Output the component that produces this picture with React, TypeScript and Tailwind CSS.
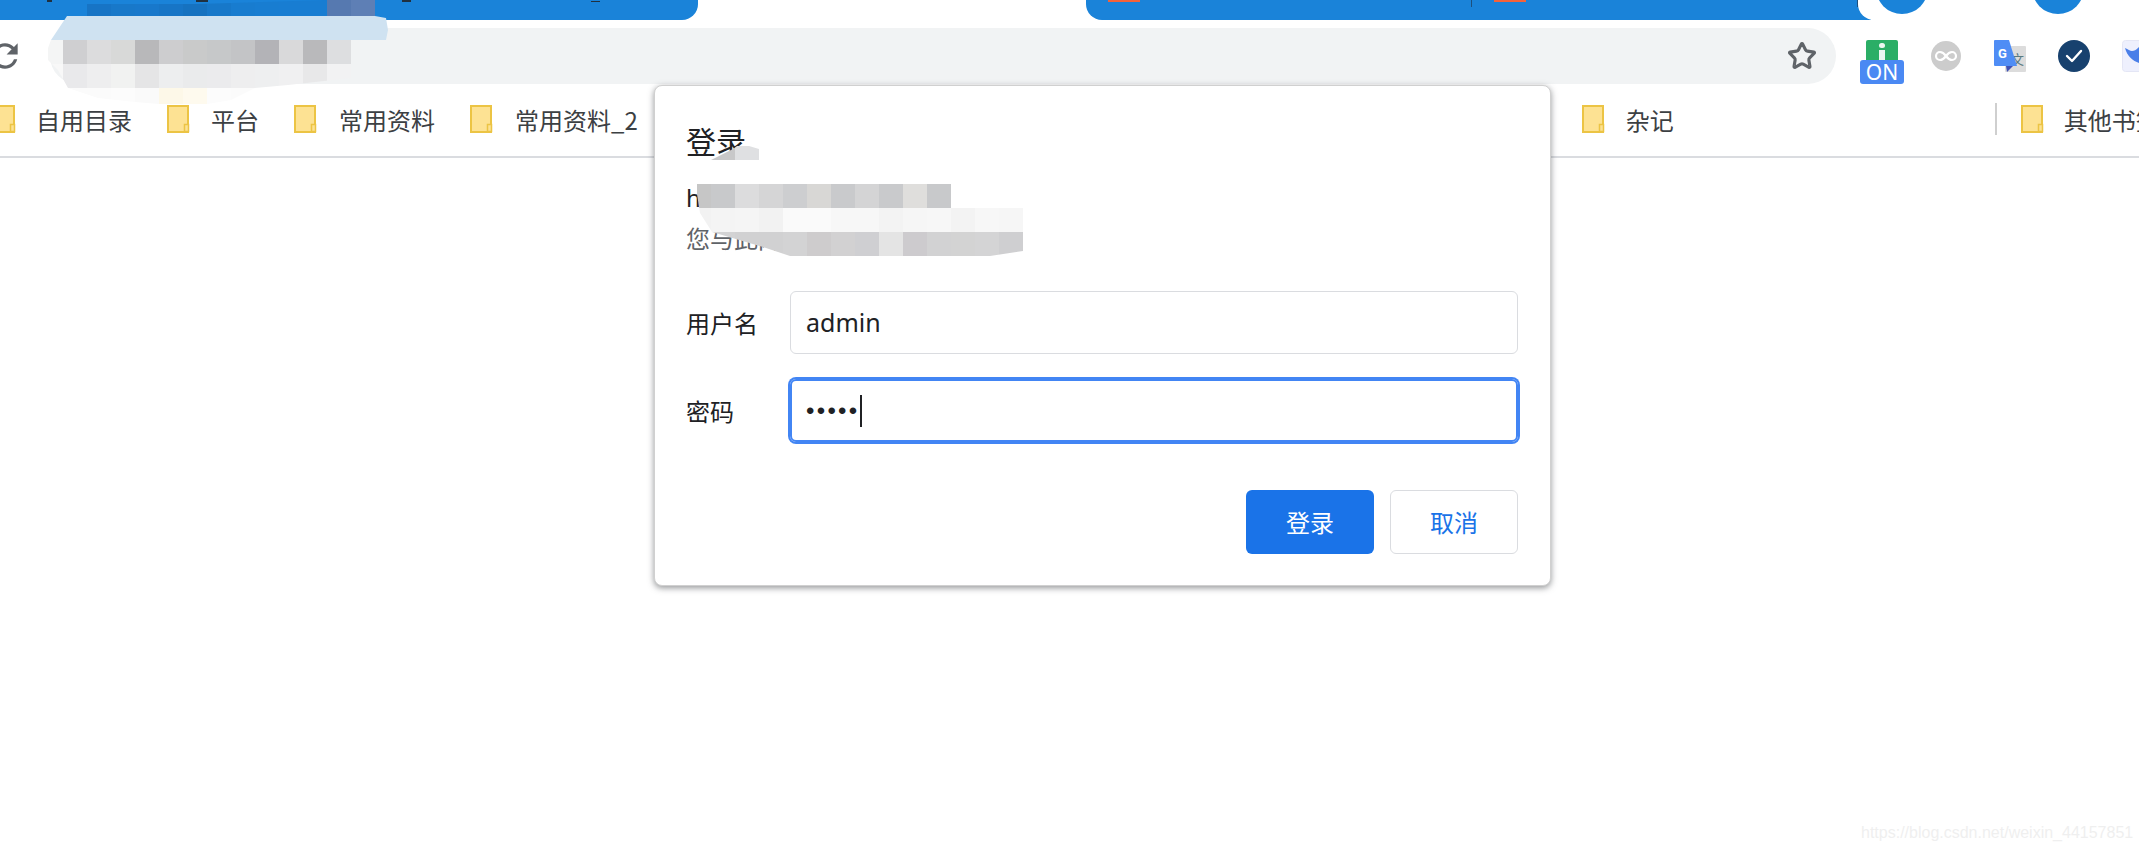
import { Star } from "lucide-react";

const cjk = "font-['Noto_Sans_CJK_SC','Noto_Sans',sans-serif]";

const topRow0 = ["w-[39px] bg-transparent", "w-6 bg-[#1774c5]", "w-6 bg-[#1878c9]", "w-6 bg-[#1878cb]", "w-6 bg-[#1775c6]", "w-6 bg-[#1672c0]", "w-6 bg-[#1778c9]", "w-6 bg-[#187ccf]", "w-6 bg-[#187dd1]", "w-6 bg-[#187dd2]", "w-6 bg-[#187dd2]", "w-6 bg-[#5679b0]", "w-6 bg-[#5e7fb5]"];
const topRow2 = ["w-[15px] bg-[#f4f5f5]", "w-6 bg-[#cfcfd1]", "w-6 bg-[#dcdcdd]", "w-6 bg-[#d8d9d8]", "w-6 bg-[#b8b8ba]", "w-6 bg-[#cdcdcf]", "w-6 bg-[#c9caca]", "w-6 bg-[#c6c8c9]", "w-6 bg-[#c3c4c6]", "w-6 bg-[#b3b3b7]", "w-6 bg-[#d9d9da]", "w-6 bg-[#b9b9bb]", "w-6 bg-[#dddee0]"];
const topRow3 = ["w-[15px] bg-[#f8f8f8]", "w-6 bg-[#e9e9eb]", "w-6 bg-[#eeeeef]", "w-6 bg-[#f1f2f1]", "w-6 bg-[#e5e5e6]", "w-6 bg-[#edeeef]", "w-6 bg-[#eaebec]", "w-6 bg-[#ebebed]", "w-6 bg-[#eeeeef]", "w-6 bg-[#eeeff0]", "w-6 bg-[#f0f0f1]", "w-6 bg-[#e8e8e9]", "w-6 bg-[#f2f2f3]"];
const topRow4 = ["w-[15px] bg-[#fdfdfd]", "w-6 bg-[#fbfbfb]", "w-6 bg-[#fbfbfb]", "w-6 bg-[#fcfcfc]", "w-6 bg-[#fafafa]", "w-6 bg-[#fdf8e8]", "w-6 bg-[#fefaee]", "w-6 bg-[#fcfcfc]", "w-6 bg-[#fbfbfb]", "w-6 bg-[#fdfdfd]"];

const urlRow1 = ["w-[14px] bg-[#c6c6c6]", "w-6 bg-[#c8c9cb]", "w-6 bg-[#dcdcdd]", "w-6 bg-[#d5d5d6]", "w-6 bg-[#cdced0]", "w-6 bg-[#d8d7d5]", "w-6 bg-[#c9cacc]", "w-6 bg-[#d4d4d5]", "w-6 bg-[#c9cacc]", "w-6 bg-[#dfdedc]", "w-6 bg-[#c8c9cb]"];
const urlRow2 = ["w-[14px] bg-[#f2f2f2]", "w-6 bg-[#f4f4f4]", "w-6 bg-[#f5f5f5]", "w-6 bg-[#f2f2f2]", "w-6 bg-[#fafafa]", "w-6 bg-[#fafafa]", "w-6 bg-[#f7f7f7]", "w-6 bg-[#f7f7f7]", "w-6 bg-[#f3f3f3]", "w-6 bg-[#f6f6f6]", "w-6 bg-[#f7f7f7]", "w-6 bg-[#f3f3f3]", "w-6 bg-[#f7f7f7]", "w-6 bg-[#f6f6f6]"];
const urlRow3 = ["w-[14px] bg-[#d3d3d4]", "w-6 bg-[#d3d3d4]", "w-6 bg-[#d1d1d2]", "w-6 bg-[#d1d1d2]", "w-6 bg-[#d3d3d4]", "w-6 bg-[#cecccd]", "w-6 bg-[#d2d1d2]", "w-6 bg-[#cfcfd2]", "w-6 bg-[#e4e4e4]", "w-6 bg-[#cdcbce]", "w-6 bg-[#d2d2d3]", "w-6 bg-[#d3d3d3]", "w-6 bg-[#d4d4d5]", "w-6 bg-[#cfcfd1]"];

function Cells({ cells, height }: { cells: string[]; height: string }) {
  return (
    <div className={`flex ${height}`}>
      {cells.map((c, i) => (
        <div key={i} className={c} />
      ))}
    </div>
  );
}

function Folder() {
  return (
    <svg width="23" height="28" viewBox="0 0 23 28" className="shrink-0">
      <path d="M1 1h20v26H1z" fill="#fde293" stroke="#ecc444" strokeWidth="2" />
      <path d="M17.5 19.5h4v7h-4z" fill="#fde293" stroke="#ecc444" strokeWidth="1.5" />
    </svg>
  );
}

function Bookmark({ label, gap = "gap-5" }: { label: string; gap?: string }) {
  return (
    <div className={`flex shrink-0 items-center ${gap}`}>
      <Folder />
      <span className="whitespace-nowrap pt-[2px] text-[24px] leading-[32px] text-[#3c4043]">{label}</span>
    </div>
  );
}

export default function App() {
  return (
    <div className={`relative h-[851px] w-[2139px] overflow-hidden bg-white ${cjk}`}>
      {/* tab strip */}
      <div className="flex h-5">
        <div className="relative w-[698px] rounded-br-[16px] bg-[#1a83d9]">
          <div className="absolute left-[47px] top-0 h-[2px] w-[5px] bg-[#20303f]" />
          <div className="absolute left-[196px] top-0 h-[2px] w-3 bg-[#20303f]" />
          <div className="absolute left-[402px] top-0 h-[2px] w-[9px] bg-[#20303f]" />
          <div className="absolute left-[591px] top-[1px] h-[1px] w-[9px] bg-[#20303f]" />
        </div>
        <div className="relative ml-[388px] w-[785px] rounded-bl-[16px] bg-[#1a83d9]">
          <div className="absolute left-[22px] top-0 h-[2px] w-8 bg-[#f4623a]" />
          <div className="absolute left-[385px] top-0 h-[7px] w-px bg-[#1d4f7c]" />
          <div className="absolute left-[408px] top-0 h-[2px] w-8 bg-[#f4623a]" />
          <div className="absolute left-[771px] top-0 h-[7px] w-px bg-[#1d4f7c]" />
        </div>
        <div className="relative z-10 -ml-[13px] flex-1 rounded-bl-[16px] bg-white">
          <div className="absolute -top-[38px] left-[18px] h-[52px] w-[52px] rounded-full bg-[#1a83d9]" />
          <div className="absolute -top-[38px] left-[174px] h-[52px] w-[52px] rounded-full bg-[#1a83d9]" />
        </div>
      </div>

      {/* toolbar */}
      <div className="flex h-16 pt-2">
        <svg width="38" height="38" viewBox="0 0 24 24" className="-ml-[14px] mt-[9px] shrink-0">
          <path
            d="M17.65 6.35C16.2 4.9 14.21 4 12 4c-4.42 0-7.99 3.58-7.99 8s3.570 8 7.990 8c3.730 0 6.840-2.550 7.730-6h-2.080c-.82 2.330-3.040 4-5.650 4-3.310 0-6-2.690-6-6s2.690-6 6-6c1.660 0 3.140.69 4.220 1.780L13 11h7V4l-2.350 2.350z"
            fill="#5f6368"
          />
        </svg>
        <div className="ml-[26px] flex h-14 w-[1786px] shrink-0 items-center justify-end rounded-full bg-[#f1f3f4] pr-[19px]">
          <Star size={30} strokeWidth={2.500} color="#5f6368" />
        </div>
        <div className="ml-[24px] flex h-14 w-11 shrink-0 flex-col items-center justify-end">
          <div className="relative h-5 w-8 rounded-t-[2px] bg-[#2bae66]">
            <div className="absolute left-[13px] top-[3px] h-[5px] w-[6px] rounded-full bg-white/90" />
            <div className="absolute left-[13px] top-[10px] h-[10px] w-[6px] bg-white/90" />
          </div>
          <div className="flex h-6 w-11 items-center justify-center rounded-[3px] bg-[#4a89f3] font-['Noto_Sans',sans-serif] text-[21px] leading-6 text-white">
            ON
          </div>
        </div>
        <svg width="30" height="30" viewBox="0 0 30 30" className="ml-[27px] mt-[13px] shrink-0">
          <circle cx="15" cy="15" r="15" fill="#cccccc" />
          <path d="M15 15c-2-2.800-4-4-6-4a4 4 0 0 0 0 8c2 0 4-1.200 6-4s4-4 6-4a4 4 0 0 1 0 8c-2 0-4-1.200-6-4z" fill="none" stroke="#fff" strokeWidth="2.200" />
        </svg>
        <svg width="32" height="32" viewBox="0 0 32 32" className="ml-[33px] mt-3 shrink-0">
          <rect x="11" y="6" width="21" height="26" rx="1" fill="#dcdcdc" />
          <text x="17" y="24" fontSize="13" fill="#5b7a80" fontFamily="Noto Sans CJK SC, sans-serif">文</text>
          <path d="M15 26l4 0-6 6-1-6z" fill="#3f51b5" />
          <path d="M1 0h14l8 26H1a1 1 0 0 1-1-1V1a1 1 0 0 1 1-1z" fill="#4f8df5" />
          <text x="4" y="18" fontSize="13" fontWeight="700" fill="#ffffff" fontFamily="Roboto, sans-serif">G</text>
        </svg>
        <div className="ml-[32px] mt-3 flex h-8 w-8 shrink-0 items-center justify-center rounded-full bg-[#17416e]">
          <svg width="18" height="14" viewBox="0 0 18 14">
            <path d="M2 7l5 5 9-10" fill="none" stroke="#fff" strokeWidth="2.400" strokeLinecap="round" strokeLinejoin="round" />
          </svg>
        </div>
        <svg width="32" height="32" viewBox="0 0 32 32" className="ml-[32px] mt-3 shrink-0">
          <rect x="0.500" y="0.500" width="31" height="31" rx="3" fill="#eef0fd" stroke="#e4e6f5" />
          <path d="M3 8c3 1 5 3 7 3s4-1 7-4l4 6-4 10c-6-2-12-7-14-15z" fill="#4a7fe8" />
        </svg>
      </div>

      {/* bookmarks bar */}
      <div className="flex h-[74px] items-center border-b-2 border-[#dadce0] pb-[2px]">
        <div className="-ml-[7px] flex items-center gap-[35px]">
          <Bookmark label="自用目录" />
          <Bookmark label="平台" gap="gap-[21px]" />
          <Bookmark label="常用资料" gap="gap-[22px]" />
          <Bookmark label="常用资料_2" gap="gap-[22px]" />
        </div>
        <div className="ml-[944px] flex items-center">
          <Bookmark label="杂记" gap="gap-[21px]" />
          <div className="ml-[321px] h-8 w-[2px] shrink-0 bg-[#cfcfcf]" />
          <div className="ml-[24px]">
            <Bookmark label="其他书签" />
          </div>
        </div>
      </div>

      {/* mosaic over the address bar */}
      <div className="absolute left-[48px] top-0 z-20 w-[340px] [clip-path:polygon(19px_16px,39px_4px,150px_4px,279px_0,327px_0,327px_16px,338px_18px,340px_30px,338px_40px,303px_40px,303px_78px,240px_85px,207px_88px,183px_100px,159px_104px,111px_104px,87px_102px,50px_98px,20px_88px,10px_70px,0_60px,0_48px,3px_40px)]">
        <Cells cells={topRow0} height="h-4" />
        <div className="h-6 bg-[#cfe2f1]" />
        <Cells cells={topRow2} height="h-6" />
        <Cells cells={topRow3} height="h-6" />
        <Cells cells={topRow4} height="h-4" />
      </div>

      {/* login dialog */}
      <div className="absolute left-[654px] top-[85px] z-10 h-[501px] w-[897px] rounded-lg border border-[#d0d0d0] bg-white pl-[31px] pr-8 pt-[39px] shadow-[0_2px_6px_rgba(60,64,67,0.55)]">
        <div className="relative -top-px text-[30px] leading-[32px] text-[#202124]">登录</div>
        <div className="mt-[23px] text-[24px] leading-[36px] text-[#202124]">
          <div className="font-['Noto_Sans',sans-serif]">https://</div>
          <div className="mt-[4px] text-[#5f6368]">您与此网站的连接不是私密连接</div>
        </div>
        <div className="mt-[35px] flex items-center">
          <label className="w-[104px] text-[24px] leading-8 text-[#202124]">用户名</label>
          <div className="flex h-[63px] flex-1 items-center rounded-md border border-[#dadce0] px-[15px] font-['Noto_Sans',sans-serif] text-[25px] text-[#202124]">
            admin
          </div>
        </div>
        <div className="mt-[25px] flex items-center">
          <label className="w-[104px] text-[24px] leading-8 text-[#202124]">密码</label>
          <div className="flex h-[63px] flex-1 items-center rounded-md border-2 border-[#4285f4] px-[14px] font-['Liberation_Sans',sans-serif] text-[24px] tracking-[2.300px] text-[#202124] ring-2 ring-[#4285f4]">
            •••••
            <span className="h-8 w-[2px] bg-[#202124]" />
          </div>
        </div>
        <div className="mt-[48px] flex justify-end gap-4">
          <button className={`h-16 w-32 rounded-md bg-[#1a73e8] text-[24px] text-white ${cjk}`}>登录</button>
          <button className={`h-16 w-32 rounded-md border border-[#dadce0] bg-white text-[24px] text-[#1a73e8] ${cjk}`}>取消</button>
        </div>
      </div>

      {/* mosaics over the dialog text */}
      <div className="absolute left-[711px] top-[146px] z-20 flex h-[14px] w-12 [clip-path:polygon(0_100%,22px_3px,26px_0,38px_0,48px_3px,100%_100%)]">
        <div className="w-6 bg-[#c8c8c9]" />
        <div className="w-6 bg-[#dfe0e2]" />
      </div>
      <div className="absolute left-[697px] top-[184px] z-20 w-[326px] [clip-path:polygon(0_0,326px_0,326px_67px,293px_72px,93px_72px,66px_63px,15px_48px,3px_29px,0_10px)]">
        <Cells cells={urlRow1} height="h-6" />
        <Cells cells={urlRow2} height="h-6" />
        <Cells cells={urlRow3} height="h-6" />
      </div>

      {/* watermark */}
      <div className="absolute left-[1861px] top-[823px] font-['Liberation_Sans',sans-serif] text-[16px] leading-5 text-[#efefef]">
        https://blog.csdn.net/weixin_44157851
      </div>
    </div>
  );
}
